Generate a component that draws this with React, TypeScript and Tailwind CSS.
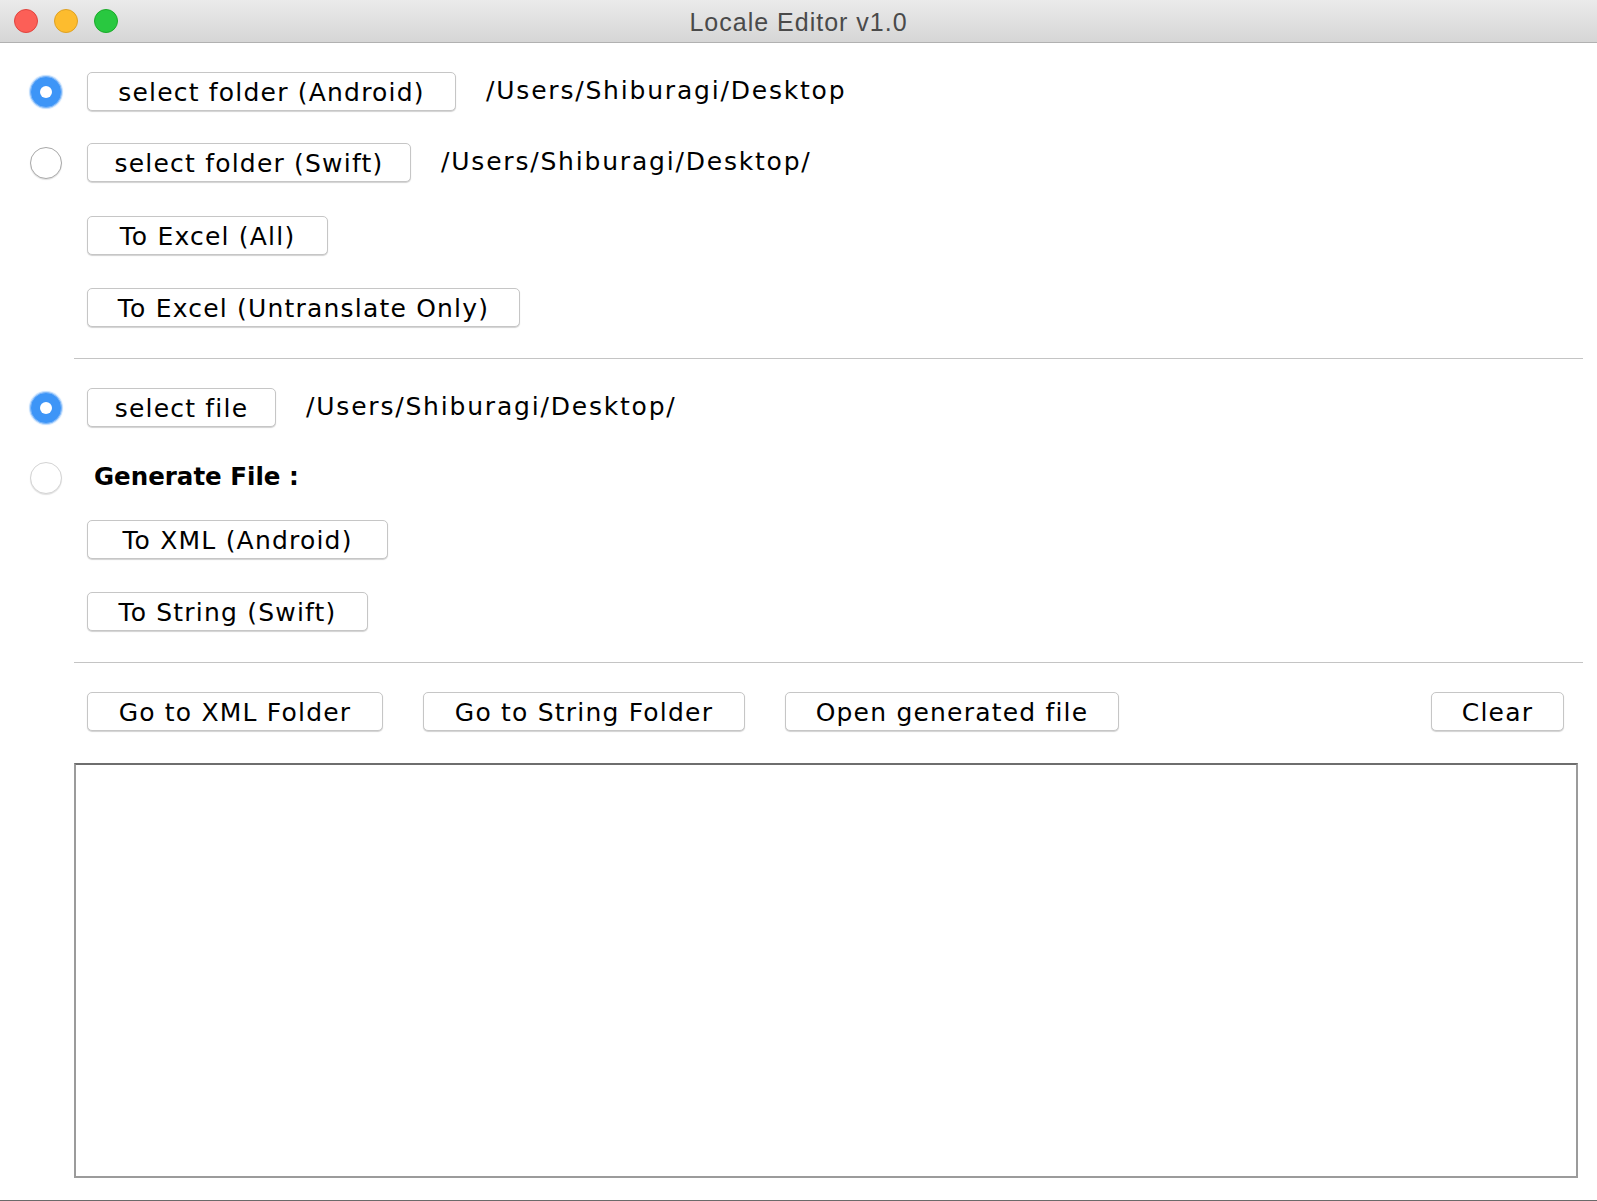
const font = "font-['DejaVu_Sans',sans-serif]";

function Radio({ checked, faint }: { checked?: boolean; faint?: boolean }) {
  if (checked) {
    return (
      <div className="w-[32px] h-[32px] rounded-full bg-[#3d95f7] border border-[#7db6f9] flex items-center justify-center shadow-[0_0_1px_1px_rgba(61,149,247,0.35)]">
        <div className="w-[12px] h-[12px] rounded-full bg-white" />
      </div>
    );
  }
  return (
    <div
      className={`w-[32px] h-[32px] rounded-full bg-white border ${
        faint ? 'border-[#d4d4d4]' : 'border-[#a9a9a9]'
      } shadow-[0_1px_1px_rgba(0,0,0,0.12)]`}
    />
  );
}

function Btn({ label, w }: { label: string; w: string }) {
  return (
    <button
      className={`${w} h-[39px] shrink-0 bg-white border border-[#c6c6c6] rounded-[5px] shadow-[0_1px_1px_rgba(0,0,0,0.18)] text-[25px] tracking-[1.2px] text-black leading-none flex items-center justify-center whitespace-nowrap pt-[2px]`}
    >
      {label}
    </button>
  );
}

function Row({
  radio,
  children,
  className = '',
}: {
  radio?: 'on' | 'off' | 'faint';
  children: React.ReactNode;
  className?: string;
}) {
  return (
    <div className={`flex items-center h-[39px] ${className}`}>
      <div className="w-[87px] shrink-0 pl-[30px]">
        {radio === 'on' && <Radio checked />}
        {radio === 'off' && <Radio />}
        {radio === 'faint' && <Radio faint />}
      </div>
      {children}
    </div>
  );
}

function Path({ text }: { text: string }) {
  return <span className="ml-[30px] text-[25px] text-black tracking-[1.8px] -mt-[2px]">{text}</span>;
}

export default function App() {
  return (
    <div className={`w-[1597px] h-[1201px] bg-white flex flex-col overflow-hidden ${font}`}>
      {/* title bar */}
      <div className="h-[43px] shrink-0 flex items-center bg-gradient-to-b from-[#ebebeb] to-[#d6d6d6] border-b border-[#b1b1b1]">
        <div className="w-[200px] flex items-center gap-[16px] pl-[14px]">
          <div className="w-[24px] h-[24px] rounded-full bg-[#fc5f57] border border-[#e0443e]" />
          <div className="w-[24px] h-[24px] rounded-full bg-[#fdbc2e] border border-[#dea123]" />
          <div className="w-[24px] h-[24px] rounded-full bg-[#29c840] border border-[#1aab29]" />
        </div>
        <div className="flex-1 text-center text-[25px] tracking-[1px] text-[#4a4a4a] font-['Liberation_Sans',sans-serif] leading-none pt-[2px]">
          Locale Editor v1.0
        </div>
        <div className="w-[200px]" />
      </div>

      <div className="flex-1 flex flex-col">
        <Row radio="on" className="mt-[29px]">
          <Btn label="select folder (Android)" w="w-[369px]" />
          <Path text="/Users/Shiburagi/Desktop" />
        </Row>
        <Row radio="off" className="mt-[32px]">
          <Btn label="select folder (Swift)" w="w-[324px]" />
          <Path text="/Users/Shiburagi/Desktop/" />
        </Row>
        <Row className="mt-[34px]">
          <Btn label="To Excel (All)" w="w-[241px]" />
        </Row>
        <Row className="mt-[33px]">
          <Btn label="To Excel (Untranslate Only)" w="w-[433px]" />
        </Row>

        <div className="ml-[74px] mr-[14px] mt-[31px] h-[1px] bg-[#c4c4c4]" />

        <Row radio="on" className="mt-[29px]">
          <Btn label="select file" w="w-[189px]" />
          <Path text="/Users/Shiburagi/Desktop/" />
        </Row>
        <Row radio="faint" className="mt-[31px]">
          <span className="ml-[7px] text-[24.5px] font-bold text-black">Generate File :</span>
        </Row>
        <Row className="mt-[23px]">
          <Btn label="To XML (Android)" w="w-[301px]" />
        </Row>
        <Row className="mt-[33px]">
          <Btn label="To String (Swift)" w="w-[281px]" />
        </Row>

        <div className="ml-[74px] mr-[14px] mt-[31px] h-[1px] bg-[#c4c4c4]" />

        <div className="flex items-center h-[39px] mt-[29px] pl-[87px] pr-[33px]">
          <Btn label="Go to XML Folder" w="w-[296px]" />
          <div className="w-[40px]" />
          <Btn label="Go to String Folder" w="w-[322px]" />
          <div className="w-[40px]" />
          <Btn label="Open generated file" w="w-[334px]" />
          <div className="flex-1" />
          <Btn label="Clear" w="w-[133px]" />
        </div>

        <div className="ml-[74px] mr-[19px] mt-[32px] h-[415px] border-2 border-[#9b9b9b] border-t-[#6e6e6e] bg-white" />

        <div className="flex-1" />
        <div className="h-[1px] bg-[#6a6a6a]" />
      </div>
    </div>
  );
}
